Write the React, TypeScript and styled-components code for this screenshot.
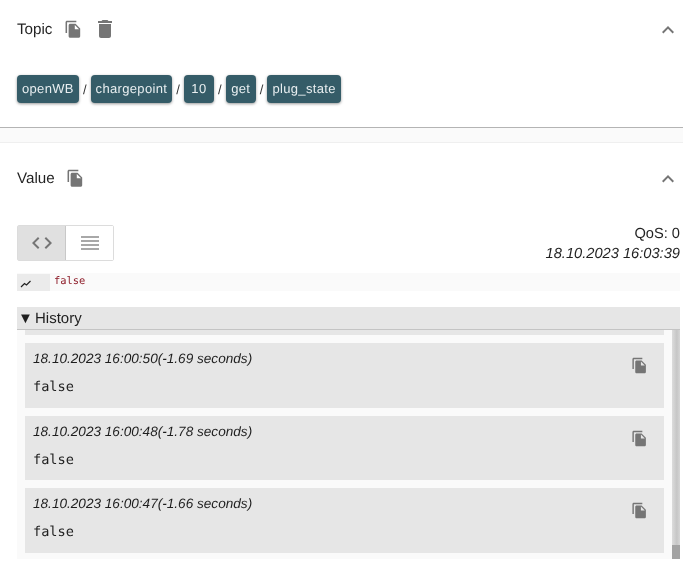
import React from "react";
import styled, { createGlobalStyle } from "styled-components";

const Global = createGlobalStyle`
  html, body { margin: 0; padding: 0; background: #fff; }
  body { width: 683px; height: 571px; overflow: hidden; font-family: "Liberation Sans", Arial, sans-serif; color: rgba(0,0,0,0.87); text-rendering: geometricPrecision; }
`;

const Page = styled.div`
  display: flex;
  flex-direction: column;
  width: 683px;
  height: 571px;
  overflow: hidden;
  will-change: transform;
`;

const TopicPanel = styled.section`
  height: 127px;
  border-bottom: 1px solid #b4b4b4;
  box-shadow: 0 1px 2px rgba(0,0,0,0.12);
`;

const Divider = styled.div`
  height: 14px;
  background: #fafafa;
  border-bottom: 1px solid #efefef;
`;

const Header = styled.header<{ $height: number }>`
  display: flex;
  align-items: center;
  height: ${(p) => p.$height}px;
  padding: 0 3px 0 17px;
`;

const Title = styled.span`
  font-size: 15.2px;
  line-height: 20px;
  padding-top: 2px;
  margin-right: 9px;
`;

const IconSlot = styled.span`
  display: flex;
  flex: none;
  width: 24px;
  height: 24px;
  margin-right: 8px;
  align-items: center;
  justify-content: center;
  color: #757575;
`;

const Chevron = styled.svg`
  margin-left: auto;
  margin-top: 1px;
  display: block;
  flex: none;
  color: #757575;
`;

const Chips = styled.div`
  display: flex;
  align-items: center;
  padding: 17px 0 0 17px;
`;

const Chip = styled.span`
  display: inline-block;
  height: 28px;
  line-height: 28px;
  padding: 0 5px;
  min-width: 20px;
  text-align: center;
  background: #355c68;
  color: #e8eef0;
  font-size: 13px;
  letter-spacing: 0.33px;
  border-radius: 4px;
  box-shadow: 0 1px 3px rgba(0,0,0,0.4);
`;

const Sep = styled.span`
  font-size: 13px;
  width: 11.75px;
  text-align: center;
  color: #333;
`;

const ValueBody = styled.div`
  padding: 12px 3px 0 17px;
`;

const ControlRow = styled.div`
  display: flex;
  justify-content: space-between;
  align-items: flex-start;
  height: 48px;
`;

const Toggle = styled.div`
  display: flex;
  width: 97px;
  height: 36px;
  box-sizing: border-box;
  border: 1px solid #dcdcdc;
  border-radius: 2px;
`;

const ToggleButton = styled.span<{ $active?: boolean }>`
  display: flex;
  align-items: center;
  justify-content: center;
  box-sizing: border-box;
  width: ${(p) => (p.$active ? 48 : 47)}px;
  background: ${(p) => (p.$active ? "#e0e0e0" : "#fff")};
  border-right: ${(p) => (p.$active ? "1px solid #c8c8c8" : "none")};
  color: ${(p) => (p.$active ? "#757575" : "#a8a8a8")};
`;

const Meta = styled.div`
  text-align: right;
  font-size: 14.67px;
  line-height: 20px;
  margin-top: -1px;
`;

const Stamp = styled.div`
  font-style: italic;
`;

const EditorLine = styled.div`
  display: flex;
  height: 18px;
  background: #fafafa;
`;

const Gutter = styled.span`
  display: flex;
  align-items: center;
  width: 33px;
  height: 17px;
  margin-top: 1px;
  padding-left: 3px;
  box-sizing: border-box;
  background: #ebebeb;
  color: #222;
`;

const EditorText = styled.span`
  font-family: "DejaVu Sans Mono", monospace;
  font-size: 10.4px;
  line-height: 16px;
  margin-left: 4px;
  color: #8f1f2b;
`;

const History = styled.div`
  margin-top: 16px;
`;

const HistoryHead = styled.div`
  display: flex;
  align-items: center;
  height: 23px;
  box-sizing: border-box;
  background: #e6e6e6;
  border-bottom: 1px solid #c4c4c4;
  font-size: 15px;
`;

const Caret = styled.span`
  width: 18px;
  padding-left: 1px;
  box-sizing: border-box;
  font-size: 15px;
`;

const HistoryBody = styled.div`
  display: flex;
  height: 229px;
  background: #fafafa;
`;

const HistoryList = styled.div`
  flex: 1;
  display: flex;
  flex-direction: column;
  gap: 8px;
  padding: 0 8px;
`;

const Clipped = styled.div`
  height: 5px;
  background: #e6e6e6;
`;

const Item = styled.article`
  position: relative;
  height: 64.5px;
  background: #e6e6e6;
  padding: 7px 8px;
  box-sizing: border-box;
`;

const ItemStamp = styled.div`
  font-size: 13.6px;
  font-style: italic;
  line-height: 17px;
`;

const ItemValue = styled.div`
  margin-top: 12px;
  font-family: "DejaVu Sans Mono", monospace;
  font-size: 13.6px;
  line-height: 17px;
`;

const ItemCopy = styled.span`
  position: absolute;
  top: 14px;
  right: 16px;
  display: flex;
  color: #757575;
`;

const Track = styled.div`
  position: relative;
  width: 8px;
  background: linear-gradient(90deg, #dcdcdc, #c6c6c6 60%, #d6d6d6);
`;

const Thumb = styled.div`
  position: absolute;
  left: 0;
  right: 0;
  bottom: 0;
  height: 14px;
  background: #a3a3a3;
`;

const CopyIcon = ({ size }: { size: number }) => (
  <svg width={size} height={size} viewBox="0 0 24 24" fill="currentColor">
    <path d="M16 1H4c-1.1 0-2 .9-2 2v14h2V3h12V1zm-1 4 6 6v10c0 1.1-.9 2-2 2H7.99C6.89 23 6 22.1 6 21l.01-14c0-1.1.89-2 1.99-2h7zm-1 7h5.5L14 6.5V12z" />
  </svg>
);

const TrashIcon = () => (
  <svg width="24" height="24" viewBox="0 0 24 24" fill="currentColor">
    <path d="M6 19c0 1.1.9 2 2 2h8c1.1 0 2-.9 2-2V7H6v12zM19 4h-3.5l-1-1h-5l-1 1H5v2h14V4z" />
  </svg>
);

const ChevronUp = () => (
  <Chevron width="24" height="24" viewBox="0 0 24 24" fill="currentColor">
    <path d="M12 8l-6 6 1.41 1.41L12 10.83l4.59 4.58L18 14z" />
  </Chevron>
);

const entries = [
  { stamp: "18.10.2023 16:00:50(-1.69 seconds)" },
  { stamp: "18.10.2023 16:00:48(-1.78 seconds)" },
  { stamp: "18.10.2023 16:00:47(-1.66 seconds)" },
];

const topic = ["openWB", "chargepoint", "10", "get", "plug_state"];

export default function App() {
  return (
    <Page>
      <Global />
      <TopicPanel>
        <Header $height={58}>
          <Title>Topic</Title>
          <IconSlot><CopyIcon size={18.5} /></IconSlot>
          <IconSlot><TrashIcon /></IconSlot>
          <ChevronUp />
        </Header>
        <Chips>
          {topic.map((t, i) => (
            <React.Fragment key={t}>
              {i > 0 && <Sep>/</Sep>}
              <Chip>{t}</Chip>
            </React.Fragment>
          ))}
        </Chips>
      </TopicPanel>
      <Divider />
      <Header $height={70}>
        <Title>Value</Title>
        <IconSlot><CopyIcon size={18.5} /></IconSlot>
        <ChevronUp />
      </Header>
      <ValueBody>
        <ControlRow>
          <Toggle>
            <ToggleButton $active>
              <svg width="24" height="24" viewBox="0 0 24 24" fill="currentColor">
                <path d="M9.4 16.6 4.8 12l4.6-4.6L8 6l-6 6 6 6 1.4-1.4zm5.2 0 4.6-4.6-4.6-4.6L16 6l6 6-6 6-1.4-1.4z" />
              </svg>
            </ToggleButton>
            <ToggleButton>
              <svg width="24" height="24" viewBox="0 0 24 24" fill="currentColor">
                <path d="M3 15h18v-2H3v2zm0 4h18v-2H3v2zm0-8h18V9H3v2zm0-6v2h18V5H3z" />
              </svg>
            </ToggleButton>
          </Toggle>
          <Meta>
            <div>QoS: 0</div>
            <Stamp>18.10.2023 16:03:39</Stamp>
          </Meta>
        </ControlRow>
        <EditorLine>
          <Gutter>
            <svg width="12" height="12" viewBox="0 0 24 24" fill="none" stroke="currentColor" strokeWidth="2.4">
              <path d="M2 20l7-7 4 3 8-8" />
            </svg>
          </Gutter>
          <EditorText>false</EditorText>
        </EditorLine>
        <History>
          <HistoryHead><Caret>▼</Caret>History</HistoryHead>
          <HistoryBody>
            <HistoryList>
              <Clipped />
              {entries.map((e) => (
                <Item key={e.stamp}>
                  <ItemStamp>{e.stamp}</ItemStamp>
                  <ItemValue>false</ItemValue>
                  <ItemCopy><CopyIcon size={17} /></ItemCopy>
                </Item>
              ))}
            </HistoryList>
            <Track><Thumb /></Track>
          </HistoryBody>
        </History>
      </ValueBody>
    </Page>
  );
}
